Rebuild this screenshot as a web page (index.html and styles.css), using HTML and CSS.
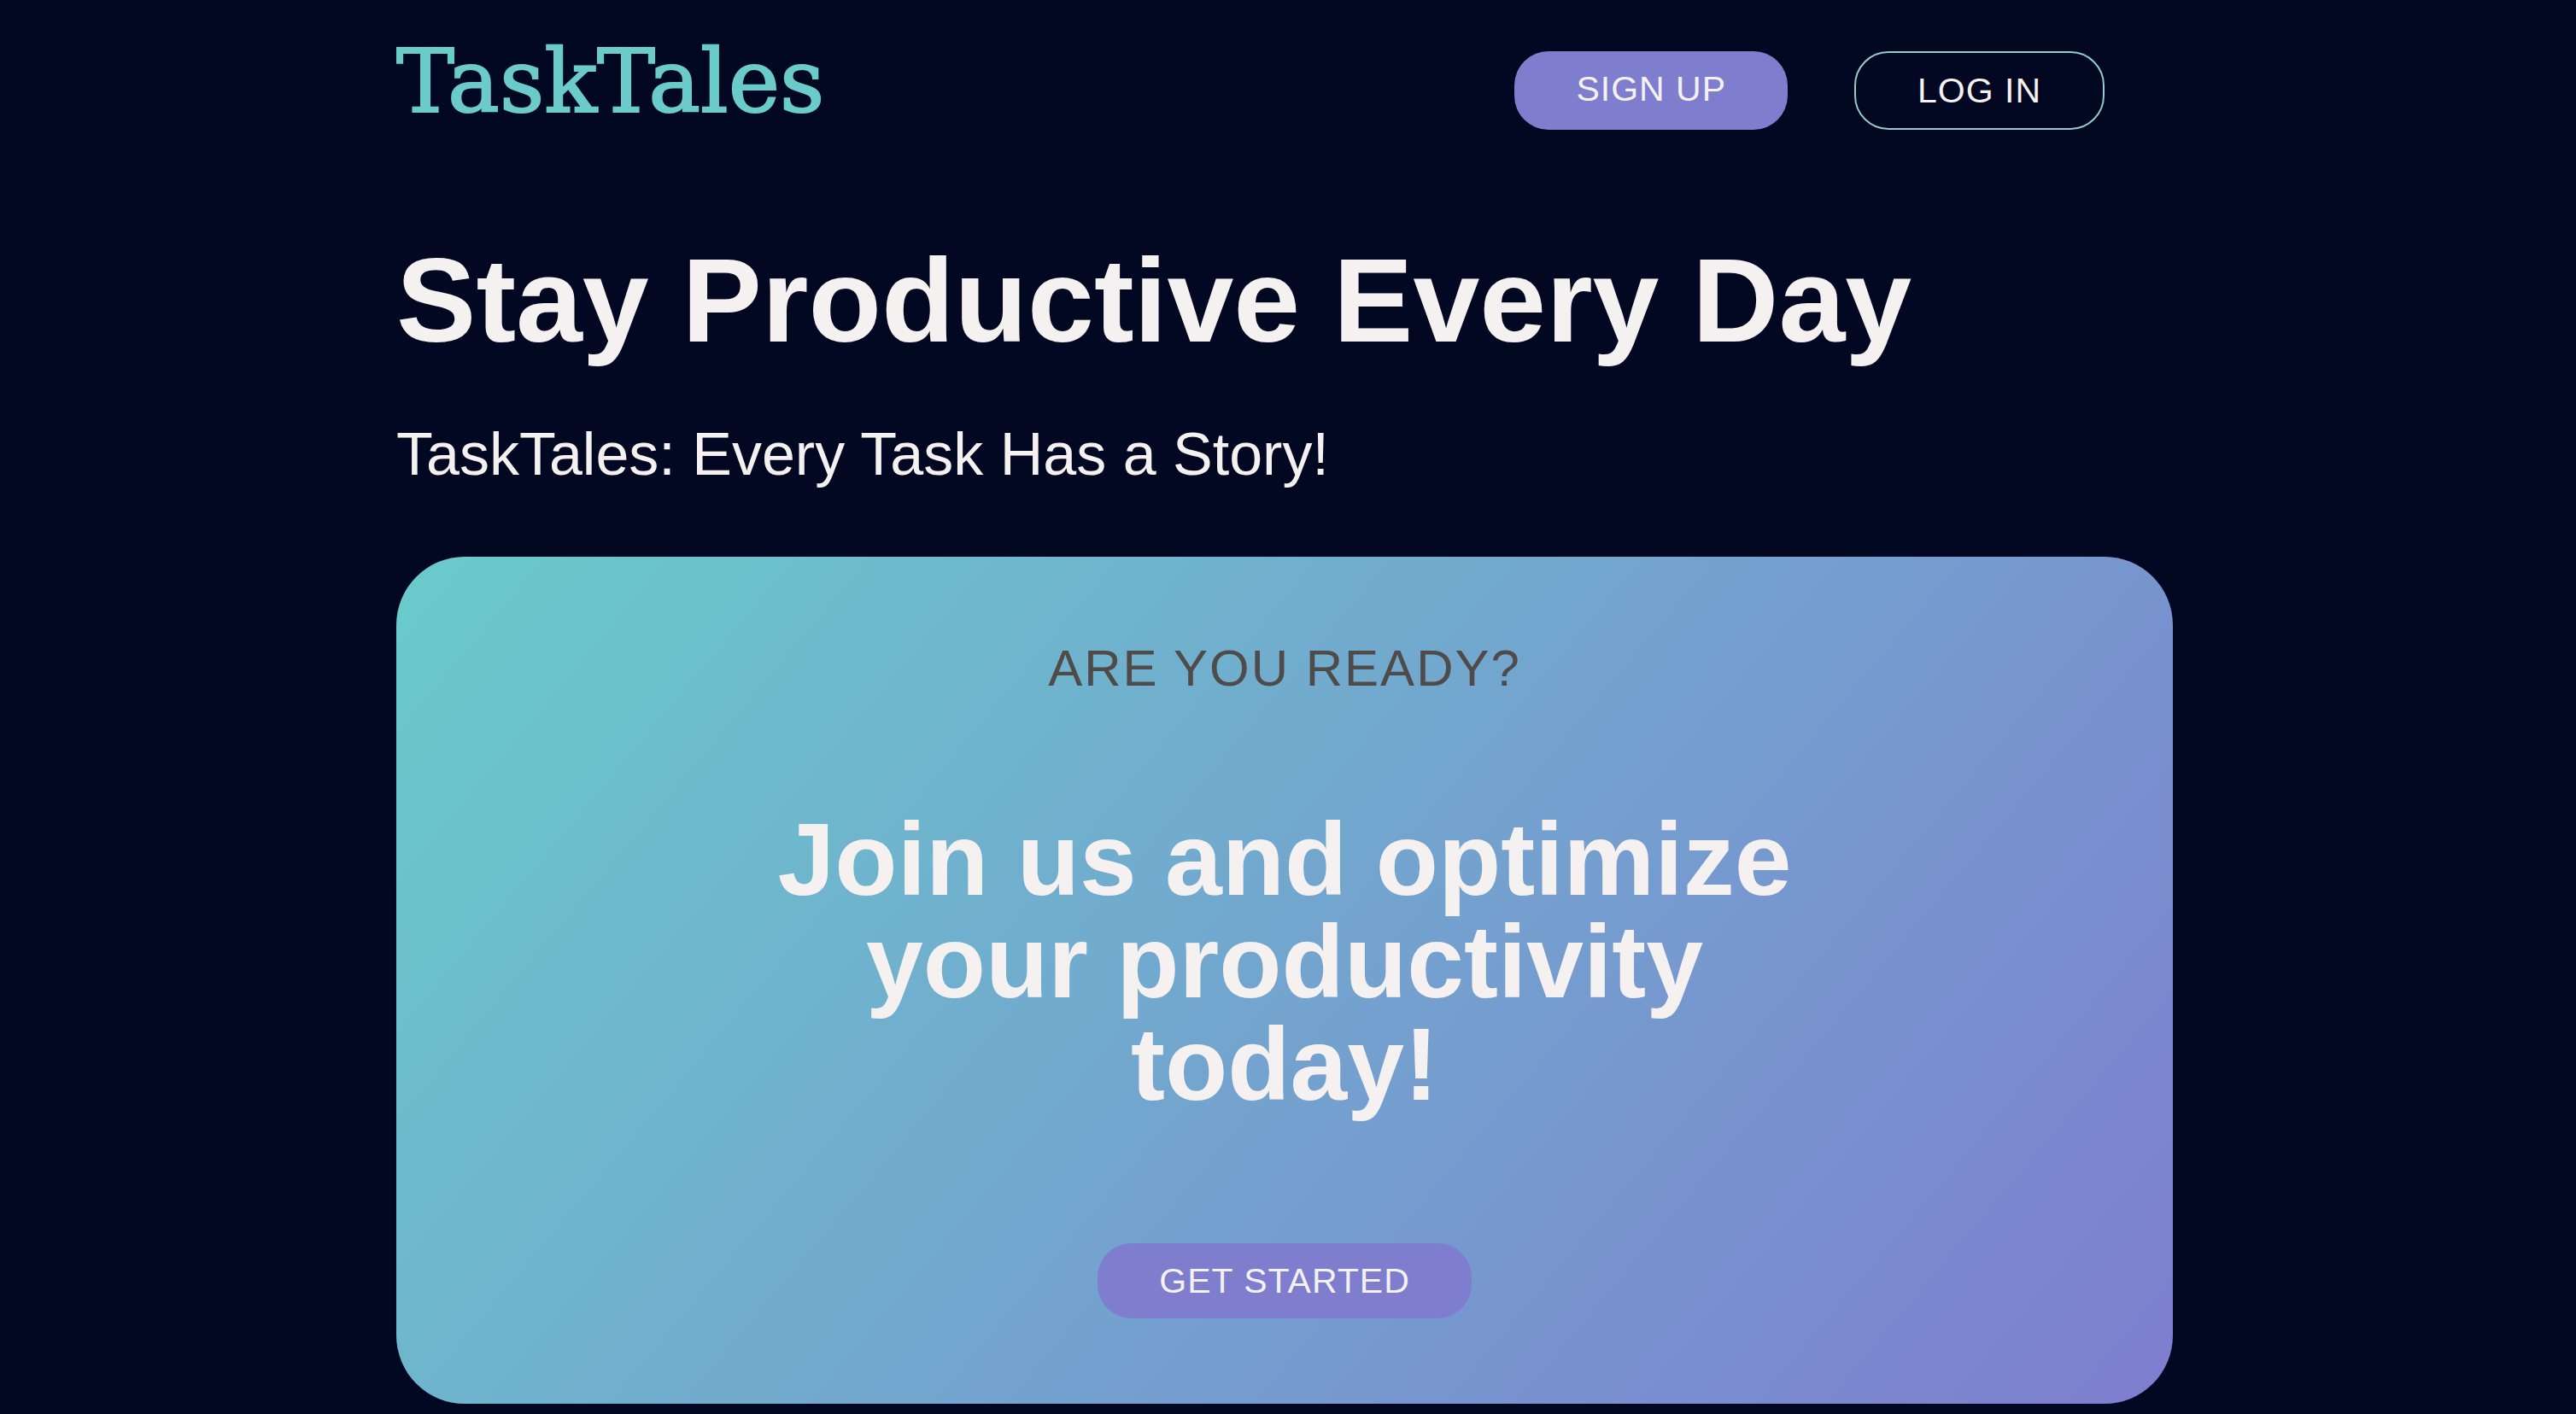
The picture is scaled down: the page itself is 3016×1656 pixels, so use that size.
FILE: index.html
```
<!DOCTYPE html>
<html lang="en">
<head>
  <meta charset="utf-8">
  <meta name="viewport" content="width=device-width, initial-scale=1">
  <title>TaskTales</title>
  <link rel="stylesheet" href="styles.css">
</head>
<body>
  <div class="page">
    <header class="header">
      <a class="logo" href="#">TaskTales</a>
      <nav class="actions">
        <button class="btn btn-signup" type="button">SIGN UP</button>
        <button class="btn btn-login" type="button">LOG IN</button>
      </nav>
    </header>
    <main>
      <h1 class="title">Stay Productive Every Day</h1>
      <p class="tagline">TaskTales: Every Task Has a Story!</p>
      <section class="card">
        <p class="card-lead">ARE YOU READY?</p>
        <h2 class="card-title">Join us and optimize your productivity today!</h2>
        <button class="btn" type="button">GET STARTED</button>
      </section>
    </main>
  </div>
</body>
</html>
```
FILE: styles.css
```
* {
  box-sizing: border-box;
  margin: 0;
}

body {
  padding: 0 8px 0 0;
  background: #020822;
  color: #f5f1f1;
  font-family: Arial, "Liberation Sans", sans-serif;
}

.page {
  max-width: 2080px;
  margin: 0 auto;
  padding-bottom: 12px;
}

.header {
  display: flex;
  justify-content: space-between;
  align-items: flex-start;
  padding: 40px 80px 0 0;
}

.logo {
  color: #6bcbcb;
  font-family: "DejaVu Serif", serif;
  font-size: 102px;
  line-height: 112px;
  text-decoration: none;
  -webkit-text-stroke: 2px #6bcbcb;
}

.actions {
  display: flex;
  gap: 78px;
  padding-top: 20px;
}

.btn {
  padding: 20px 72px;
  border: 0;
  border-radius: 40px;
  background: #7e7dce;
  color: inherit;
  font-family: inherit;
  font-size: 41px;
  line-height: 48px;
  letter-spacing: 1px;
  white-space: nowrap;
  cursor: pointer;
}

.btn-signup {
  padding-bottom: 24px;
}

.btn-login {
  border: 2px solid #94cbcb;
  background: transparent;
}

.title {
  margin-top: 120px;
  font-size: 140px;
  line-height: 160px;
}

.tagline {
  margin-top: 60px;
  font-size: 70px;
  line-height: 80px;
}

.card {
  display: flex;
  flex-direction: column;
  align-items: center;
  margin-top: 80px;
  padding: 96px 80px 100px;
  border-radius: 80px;
  background: linear-gradient(130deg, #69cbcb, #759dcf 60%, #7e7dce);
  text-align: center;
}

.card-lead {
  color: #504b4b;
  font-size: 60px;
  line-height: 70px;
  letter-spacing: 2px;
}

.card-title {
  max-width: 1280px;
  margin: 128px 0 150px;
  font-size: 120px;
  line-height: 120px;
}
```
